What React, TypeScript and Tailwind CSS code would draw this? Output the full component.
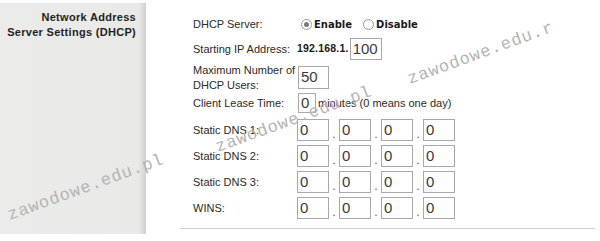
import React from 'react';

const label = "whitespace-nowrap text-[11px] leading-[15px] text-[#2a2a2a] font-['Liberation_Sans',Arial,sans-serif]";
const boxText = "text-[15px] text-[#3a3a3a] font-['Liberation_Sans',Arial,sans-serif]";

function Field({ value, className }: { value: string; className: string }) {
  return (
    <div className={`${className} h-full border border-[#a8a8a8] bg-white pl-[2px] flex items-center ${boxText}`}>
      {value}
    </div>
  );
}

function Radio({ checked }: { checked?: boolean }) {
  return (
    <span className="w-[11px] h-[11px] rounded-full border border-[#9a9a9a] bg-white flex items-center justify-center shrink-0">
      {checked && <span className="w-[5px] h-[5px] rounded-full bg-[#7a7a7a]" />}
    </span>
  );
}

function IpRow({ name }: { name: string }) {
  const parts = ['0', '0', '0', '0'];
  return (
    <div className="flex h-[22px] items-center">
      <div className={`w-[104px] ${label}`}>{name}</div>
      {parts.map((p, i) => (
        <React.Fragment key={i}>
          {i > 0 && <span className="w-[10px] self-end pb-[2px] text-center text-[11px] leading-none text-[#555]">.</span>}
          <Field value={p} className="w-[32px]" />
        </React.Fragment>
      ))}
    </div>
  );
}

const marks = [
  { pos: 'left-[404px] top-[68px]' },
  { pos: 'left-[212px] top-[136px]' },
  { pos: 'left-[4px] top-[204px]' },
];

export default function App() {
  return (
    <div className="relative w-[600px] h-[241px] bg-white overflow-hidden">
      <div className="flex pt-[3px]">
        {/* left caption panel */}
        <div className="w-[146px] h-[231px] shrink-0 bg-[linear-gradient(to_right,#ebebe9_0%,#e9e9e7_95%,#cfcfcd_100%)] pt-[7px] pr-[10px] text-right">
          <div className="whitespace-nowrap text-[11px] leading-[15px] font-bold text-[#1f1f1f] font-['Liberation_Sans',Arial,sans-serif] tracking-[0.3px]">
            Network Address
            <br />
            Server Settings (DHCP)
          </div>
        </div>

        {/* settings */}
        <div className="pl-[34px] pt-[10px]">
          <div className="pl-[13px] flex flex-col">
            <div className="flex h-[22px] items-center">
              <div className={`w-[108px] ${label}`}>DHCP Server:</div>
              <Radio checked />
              <span className="ml-[2px] text-[10px] font-bold text-[#1a1a1a] font-['DejaVu_Sans',Verdana,sans-serif]">Enable</span>
              <span className="ml-[11px]"><Radio /></span>
              <span className="ml-[2px] text-[10px] font-bold text-[#1a1a1a] font-['DejaVu_Sans',Verdana,sans-serif]">Disable</span>
            </div>

            <div className="flex h-[22px] items-center mt-[3px]">
              <div className={`w-[104px] ${label}`}>Starting IP Address:</div>
              <span className="text-[10.5px] tracking-[0.2px] font-bold text-[#1a1a1a] font-['Liberation_Sans',Arial,sans-serif]">192.168.1.</span>
              <Field value="100" className="w-[32px] ml-px" />
            </div>

            <div className="flex h-[23px] items-center mt-[6px]">
              <div className={`w-[105px] ${label}`}>
                Maximum Number of
                <br />
                DHCP Users:
              </div>
              <Field value="50" className="w-[31px]" />
            </div>

            <div className="flex h-[20px] items-center mt-[4px]">
              <div className={`w-[105px] ${label}`}>Client Lease Time:</div>
              <Field value="0" className="w-[18px]" />
              <span className={`ml-[2px] ${label}`}>minutes (0 means one day)</span>
            </div>

            <div className="flex flex-col gap-[4px] mt-[6px]">
              <IpRow name="Static DNS 1:" />
              <IpRow name="Static DNS 2:" />
              <IpRow name="Static DNS 3:" />
              <IpRow name="WINS:" />
            </div>
          </div>
          <div className="mt-[9px] w-[415px] h-px bg-[#cfcfcf]" />
        </div>
      </div>

      {/* watermarks */}
      {marks.map((m, i) => (
        <span
          key={i}
          className={`absolute ${m.pos} origin-top-left -rotate-[20deg] whitespace-nowrap text-[17px] tracking-[0.8px] text-[#b4b4b4] font-['Liberation_Mono','Courier_New',monospace] pointer-events-none`}
        >
          {i === 0 ? 'zawodowe.edu.r' : 'zawodowe.edu.pl'}
        </span>
      ))}
    </div>
  );
}
